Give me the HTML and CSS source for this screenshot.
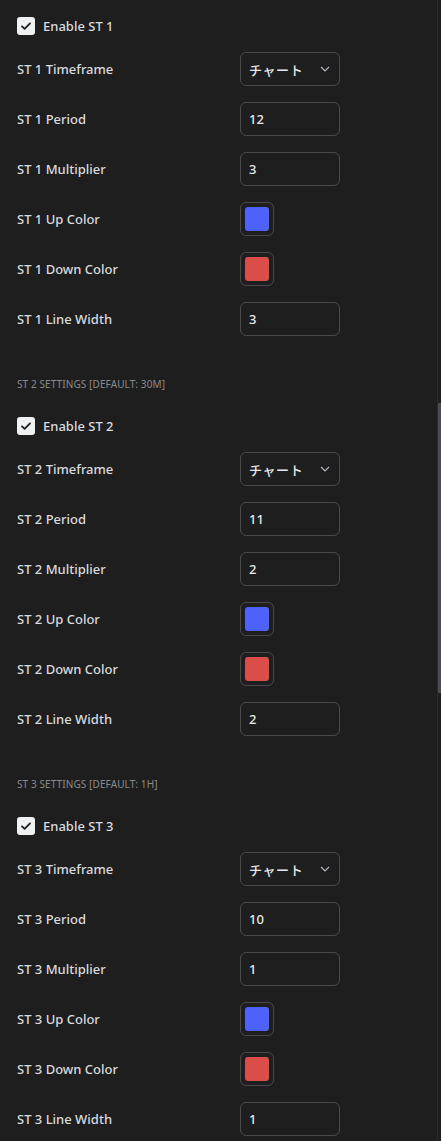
FILE: index.html
```html
<!DOCTYPE html>
<html lang="ja">

<head>
  <meta charset="UTF-8">
  <meta name="viewport" content="width=device-width, initial-scale=1.0">
  <title>Supertrend settings</title>
  <link rel="stylesheet" href="styles.css">
</head>

<body>
  <div class="panel">
    <!-- ST 1 -->
    <div class="section">
      <label class="check-row">
        <span class="check"><svg width="12" height="12" viewBox="0 0 12 12"><path d="M2 6.3l2.6 2.5L10 3.4" fill="none" stroke="#1e1e1e" stroke-width="1.8" stroke-linecap="round" stroke-linejoin="round"/></svg></span>
        <span>Enable ST 1</span>
      </label>
      <div class="field"><span class="label">ST 1 Timeframe</span>
        <div class="select">チャート<svg class="chev" width="10" height="6" viewBox="0 0 10 6"><path d="M1 1l4 4 4-4" fill="none" stroke="#b2b5be" stroke-width="1.2"/></svg></div>
      </div>
      <div class="field"><span class="label">ST 1 Period</span><div class="input">12</div></div>
      <div class="field"><span class="label">ST 1 Multiplier</span><div class="input">3</div></div>
      <div class="field"><span class="label">ST 1 Up Color</span><div class="swatch"><span class="blue"></span></div></div>
      <div class="field"><span class="label">ST 1 Down Color</span><div class="swatch"><span class="red"></span></div></div>
      <div class="field"><span class="label">ST 1 Line Width</span><div class="input">3</div></div>
    </div>

    <!-- ST 2 -->
    <div class="section">
      <div class="heading">ST 2 SETTINGS [DEFAULT: 30M]</div>
      <label class="check-row">
        <span class="check"><svg width="12" height="12" viewBox="0 0 12 12"><path d="M2 6.3l2.6 2.5L10 3.4" fill="none" stroke="#1e1e1e" stroke-width="1.8" stroke-linecap="round" stroke-linejoin="round"/></svg></span>
        <span>Enable ST 2</span>
      </label>
      <div class="field"><span class="label">ST 2 Timeframe</span>
        <div class="select">チャート<svg class="chev" width="10" height="6" viewBox="0 0 10 6"><path d="M1 1l4 4 4-4" fill="none" stroke="#b2b5be" stroke-width="1.2"/></svg></div>
      </div>
      <div class="field"><span class="label">ST 2 Period</span><div class="input">11</div></div>
      <div class="field"><span class="label">ST 2 Multiplier</span><div class="input">2</div></div>
      <div class="field"><span class="label">ST 2 Up Color</span><div class="swatch"><span class="blue"></span></div></div>
      <div class="field"><span class="label">ST 2 Down Color</span><div class="swatch"><span class="red"></span></div></div>
      <div class="field"><span class="label">ST 2 Line Width</span><div class="input">2</div></div>
    </div>

    <!-- ST 3 -->
    <div class="section">
      <div class="heading">ST 3 SETTINGS [DEFAULT: 1H]</div>
      <label class="check-row">
        <span class="check"><svg width="12" height="12" viewBox="0 0 12 12"><path d="M2 6.3l2.6 2.5L10 3.4" fill="none" stroke="#1e1e1e" stroke-width="1.8" stroke-linecap="round" stroke-linejoin="round"/></svg></span>
        <span>Enable ST 3</span>
      </label>
      <div class="field"><span class="label">ST 3 Timeframe</span>
        <div class="select">チャート<svg class="chev" width="10" height="6" viewBox="0 0 10 6"><path d="M1 1l4 4 4-4" fill="none" stroke="#b2b5be" stroke-width="1.2"/></svg></div>
      </div>
      <div class="field"><span class="label">ST 3 Period</span><div class="input">10</div></div>
      <div class="field"><span class="label">ST 3 Multiplier</span><div class="input">1</div></div>
      <div class="field"><span class="label">ST 3 Up Color</span><div class="swatch"><span class="blue"></span></div></div>
      <div class="field"><span class="label">ST 3 Down Color</span><div class="swatch"><span class="red"></span></div></div>
      <div class="field"><span class="label">ST 3 Line Width</span><div class="input">1</div></div>
    </div>
  </div>

  <div class="scroll-track"><div class="scroll-thumb"></div></div>
</body>

</html>
```

FILE: styles.css
```css
* {
  margin: 0;
  padding: 0;
  box-sizing: border-box;
}

body {
  background: #1e1e1e;
  color: #d8dadf;
  font-family: "Noto Sans", "Noto Sans CJK JP", sans-serif;
  font-size: 13px;
  height: 1141px;
  overflow: hidden;
}

.panel {
  padding: 17px 0 0 17px;
}

.check-row {
  display: flex;
  align-items: center;
  gap: 8px;
  height: 18px;
  margin-bottom: 17px;
  font-weight: 500;
}

.check {
  width: 18px;
  height: 18px;
  border-radius: 3px;
  background: #f0f1f3;
  display: flex;
  align-items: center;
  justify-content: center;
}

.field {
  display: flex;
  align-items: center;
  height: 34px;
  margin-bottom: 16px;
}

.label {
  width: 223px;
  font-weight: 500;
}

.input,
.select {
  width: 100px;
  height: 34px;
  border: 1px solid #4a4a4a;
  border-radius: 6px;
  display: flex;
  align-items: center;
  padding: 0 8px;
  color: #e6e7ea;
  font-weight: 500;
}

.select {
  justify-content: space-between;
  font-family: "Noto Sans CJK JP", sans-serif;
  font-weight: 500;
  letter-spacing: 0.6px;
  padding-right: 9px;
}

.swatch {
  width: 34px;
  height: 34px;
  border: 1px solid #4a4a4a;
  border-radius: 6px;
  display: flex;
  align-items: center;
  justify-content: center;
}

.swatch span {
  width: 24px;
  height: 24px;
  border-radius: 3px;
}

.blue {
  background: #4d62fb;
}

.red {
  background: #db4d48;
}

/* field margin (16px) collapses into this one */
.heading {
  margin: 42px 0 27px;
  height: 12px;
  line-height: 12px;
  font-size: 10px;
  color: #8a8b8e;
  letter-spacing: 0.1px;
}

.scroll-track {
  position: fixed;
  top: 0;
  right: 0;
  width: 4px;
  height: 100%;
  border-left: 1px solid #2b2b2b;
}

.scroll-thumb {
  position: absolute;
  top: 403px;
  left: 0;
  width: 3px;
  height: 290px;
  background: #4a4b55;
}
```
